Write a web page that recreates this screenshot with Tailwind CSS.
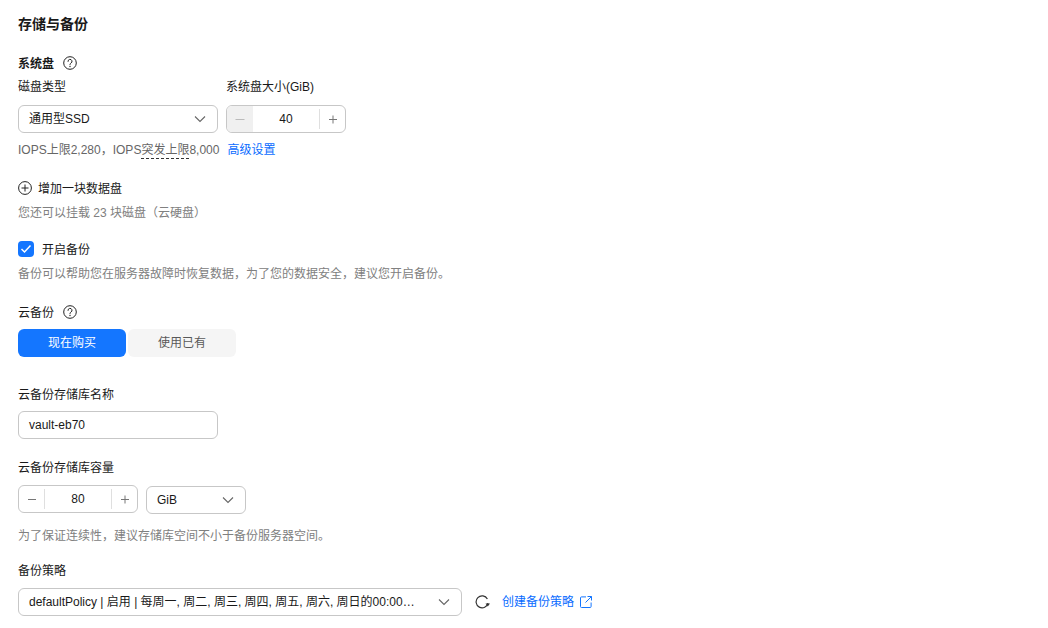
<!DOCTYPE html>
<html lang="zh"><head><meta charset="utf-8"><script src="https://cdn.jsdelivr.net/npm/@tailwindcss/browser@4"></script></head>
<body class="bg-white">
<div class="w-[1048px] h-[628px] overflow-hidden pl-[18px] pt-[15px] text-[12px] leading-[18px] text-[#191919] font-['Liberation_Sans','Noto_Sans_CJK_SC',sans-serif]">
  <h2 class="text-[14px] font-bold leading-[18px]">存储与备份</h2>

  <div class="mt-[21px] flex items-center h-[18px]">
    <span class="font-semibold mt-[2px]">系统盘</span>
    <svg class="ml-[9px]" width="14" height="14" viewBox="0 0 14 14" fill="none" stroke="#222" stroke-width="1"><circle cx="7" cy="7" r="6.3"/><path d="M5 5.400a2 2 0 1 1 3 1.700c-.7.400-1 .8-1 1.600" stroke-linecap="round"/><circle cx="7" cy="10.500" r=".7" fill="#222" stroke="none"/></svg>
  </div>

  <div class="mt-[6px] flex gap-[8px]">
    <div class="w-[200px]">
      <div class="h-[18px]">磁盘类型</div>
      <div class="mt-[9px] h-[28px] rounded-[6px] border border-[#c7c7c7] flex items-center justify-between pl-[10px] pr-[11px]">
        <span>通用型SSD</span>
        <svg width="12" height="8" viewBox="0 0 12 8" fill="none" stroke="#666" stroke-width="1.1"><path d="M1 1.500 6 6.500l5-5"/></svg>
      </div>
    </div>
    <div class="w-[120px]">
      <div class="h-[18px]">系统盘大小(GiB)</div>
      <div class="mt-[9px] h-[28px] rounded-[6px] border border-[#c7c7c7] flex items-center overflow-hidden">
        <div class="w-[26px] h-full bg-[#f0f0f0] flex items-center justify-center">
          <svg width="10" height="10" viewBox="0 0 10 10" stroke="#bbb"><path d="M0.500 5.500h9"/></svg>
        </div>
        <div class="flex-1 text-center">40</div>
        <div class="w-[26px] h-[20px] border-l border-[#dfdfdf] flex items-center justify-center">
          <svg width="10" height="10" viewBox="0 0 10 10" stroke="#777"><path d="M1 5.500h8M5 1.500v8"/></svg>
        </div>
      </div>
    </div>
  </div>

  <div class="mt-[7px] flex h-[18px] pt-px text-[#666]">
    <span>IOPS上限2,280，IOPS<span class="border-b border-dashed border-[#333] h-[18px] inline-block">突发上限</span>8,000</span>
    <span class="ml-[8px] text-[#0a6cff]">高级设置</span>
  </div>

  <div class="mt-[21px] flex items-center h-[18px]">
    <svg width="14" height="14" viewBox="0 0 14 14" fill="none" stroke="#222"><circle cx="7" cy="7" r="6.400"/><path d="M3.500 7h7M7 3.500v7"/></svg>
    <span class="ml-[6px] mt-[2px]">增加一块数据盘</span>
  </div>
  <div class="mt-[6px] h-[18px] pt-px text-[#808080]">您还可以挂载 23 块磁盘（云硬盘）</div>

  <div class="mt-[20px] flex items-center h-[16px]">
    <span class="w-[16px] h-[16px] rounded-[4px] bg-[#1476ff] flex items-center justify-center">
      <svg width="12" height="10" viewBox="0 0 12 10" fill="none" stroke="#fff" stroke-width="1.5"><path d="M1.500 5 4.500 8l6-6.500"/></svg>
    </span>
    <span class="ml-[8px] mt-[2px]">开启备份</span>
  </div>
  <div class="mt-[7px] h-[18px] pt-px text-[#808080]">备份可以帮助您在服务器故障时恢复数据，为了您的数据安全，建议您开启备份。</div>

  <div class="mt-[21px] flex items-center h-[18px]">
    <span class="mt-[2px]">云备份</span>
    <svg class="ml-[9px]" width="14" height="14" viewBox="0 0 14 14" fill="none" stroke="#222" stroke-width="1"><circle cx="7" cy="7" r="6.3"/><path d="M5 5.400a2 2 0 1 1 3 1.700c-.7.400-1 .8-1 1.600" stroke-linecap="round"/><circle cx="7" cy="10.500" r=".7" fill="#222" stroke="none"/></svg>
  </div>
  <div class="mt-[8px] flex gap-[2px]">
    <div class="w-[108px] h-[28px] rounded-[6px] bg-[#1476ff] text-white flex items-center justify-center">现在购买</div>
    <div class="w-[108px] h-[28px] rounded-[6px] bg-[#f5f5f5] text-[#595959] flex items-center justify-center">使用已有</div>
  </div>

  <div class="mt-[28px] h-[18px] pt-px">云备份存储库名称</div>
  <div class="mt-[8px] w-[200px] h-[28px] rounded-[6px] border border-[#c7c7c7] flex items-center pl-[10px]">vault-eb70</div>

  <div class="mt-[19px] h-[18px] pt-px">云备份存储库容量</div>
  <div class="mt-[9px] flex items-start gap-[8px]">
    <div class="w-[120px] h-[28px] rounded-[6px] border border-[#c7c7c7] flex items-center">
      <div class="w-[26px] h-[20px] border-r border-[#dfdfdf] flex items-center justify-center">
        <svg width="10" height="10" viewBox="0 0 10 10" stroke="#777"><path d="M1 5.500h8"/></svg>
      </div>
      <div class="flex-1 text-center">80</div>
      <div class="w-[26px] h-[20px] border-l border-[#dfdfdf] flex items-center justify-center">
        <svg width="10" height="10" viewBox="0 0 10 10" stroke="#777"><path d="M1 5.500h8M5 1.500v8"/></svg>
      </div>
    </div>
    <div class="mt-[1px] w-[100px] h-[28px] rounded-[6px] border border-[#c7c7c7] flex items-center justify-between pl-[10px] pr-[11px]">
      <span>GiB</span>
      <svg width="12" height="8" viewBox="0 0 12 8" fill="none" stroke="#666" stroke-width="1.1"><path d="M1 1.500 6 6.500l5-5"/></svg>
    </div>
  </div>
  <div class="mt-[12px] h-[18px] pt-px text-[#808080]">为了保证连续性，建议存储库空间不小于备份服务器空间。</div>

  <div class="mt-[17px] h-[18px] pt-px">备份策略</div>
  <div class="mt-[9px] flex items-center">
    <div class="w-[444px] h-[28px] rounded-[6px] border border-[#c7c7c7] flex items-center justify-between pl-[10px] pr-[11px]">
      <span>defaultPolicy | 启用 | 每周一, 周二, 周三, 周四, 周五, 周六, 周日的00:00…</span>
      <svg width="12" height="8" viewBox="0 0 12 8" fill="none" stroke="#666" stroke-width="1.1"><path d="M1 1.500 6 6.500l5-5"/></svg>
    </div>
    <svg class="ml-[13px]" width="15" height="14" viewBox="0 0 15 14" fill="none" stroke="#333" stroke-width="1.2"><path d="M13 8A6 6 0 1 1 12.400 4"/><path d="M10.500 8.500h4.500L12.800 11.500z" fill="#333" stroke="none"/></svg>
    <span class="ml-[12px] text-[#0a6cff]">创建备份策略</span>
    <svg class="ml-[6px]" width="12" height="12" viewBox="0 0 12 12" fill="none" stroke="#1476ff"><path d="M6 .9H1.500a1 1 0 0 0-1 1v8.600a1 1 0 0 0 1 1h8.600a1 1 0 0 0 1-1V6.500M7.500.5h4v4M11.500.5 5.500 6.500"/></svg>
  </div>
</div>
</body></html>
